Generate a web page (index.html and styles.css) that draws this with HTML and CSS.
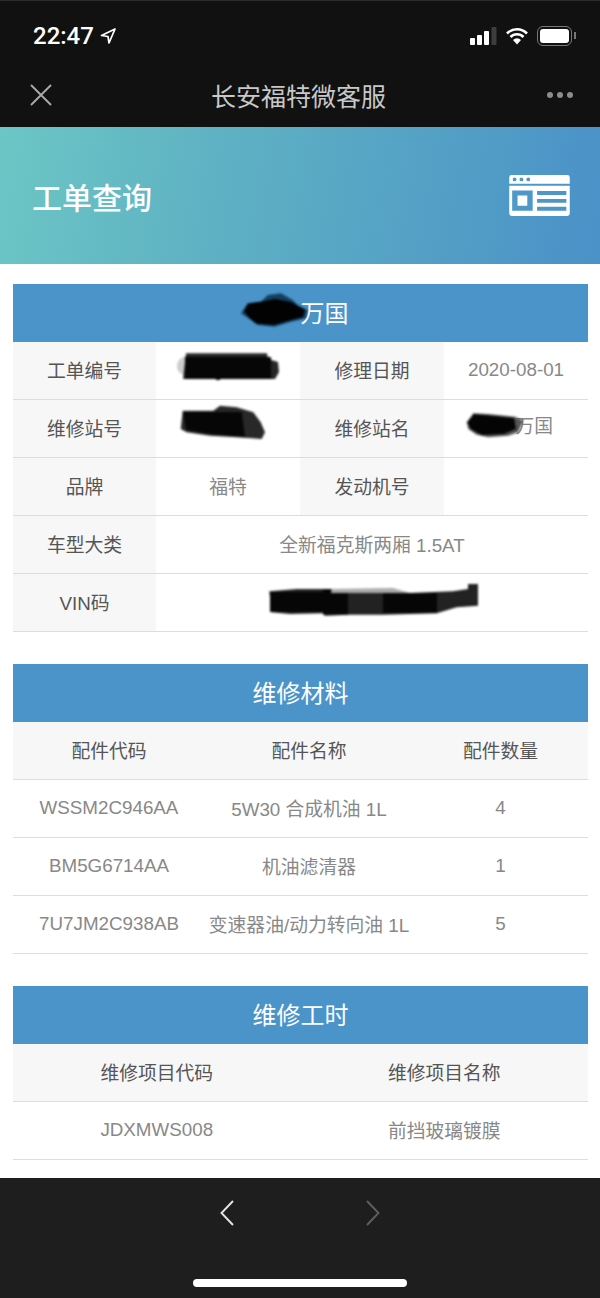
FILE: index.html
```html
<!DOCTYPE html>
<html lang="zh-CN">
<head>
  <meta charset="UTF-8" />
  <meta name="viewport" content="width=device-width, initial-scale=1" />
  <title>工单查询</title>
  <link rel="stylesheet" href="styles.css">
</head>
<body>
  <div class="top-bar">
    <div class="status-bar">
      <div class="time">22:47
        <svg class="loc" width="16" height="16" viewBox="0 0 16 16"><path d="M15 1 1.500 7.500 8 8.500 9 15Z" fill="none" stroke="#fff" stroke-width="1.700" stroke-linejoin="round"/></svg>
      </div>
      <div class="status-icons">
        <svg width="27" height="18" viewBox="0 0 27 18">
          <rect x="0" y="11" width="5" height="7" rx="1" fill="#fff"/>
          <rect x="7" y="8" width="5" height="10" rx="1" fill="#fff"/>
          <rect x="14" y="4" width="5" height="14" rx="1" fill="#fff"/>
          <rect x="21.500" y="0" width="5" height="18" rx="1" fill="#3d3d3d"/>
        </svg>
        <svg width="24" height="18" viewBox="0 0 24 18">
          <path d="M2 6.500a14 14 0 0 1 20 0M5.500 10a9 9 0 0 1 13 0" fill="none" stroke="#fff" stroke-width="2.600"/>
          <path d="M8 13a5.500 5.500 0 0 1 8 0l-4 4.500Z" fill="#fff"/>
        </svg>
        <div class="battery"><div class="battery-level"></div></div>
      </div>
    </div>
    <div class="nav-bar">
      <svg class="close" width="22" height="22" viewBox="0 0 22 22"><path d="M1 1 21 21M21 1 1 21" stroke="#aaa" stroke-width="1.900" fill="none"/></svg>
      <div class="nav-title">长安福特微客服</div>
      <div class="dots"><i></i><i></i><i></i></div>
    </div>
  </div>

  <div class="banner">
    <h1>工单查询</h1>
    <svg width="61" height="41" viewBox="0 0 62 42">
      <path fill="#fff" fill-rule="evenodd" d="M2.500 0h57A2.500 2.500 0 0 1 62 2.500V9H0V2.500A2.500 2.500 0 0 1 2.500 0ZM5.500 2.500a2 2 0 1 0 0 4 2 2 0 0 0 0-4Zm7 0a2 2 0 1 0 0 4 2 2 0 0 0 0-4Zm7 0a2 2 0 1 0 0 4 2 2 0 0 0 0-4Z"/>
      <path fill="#fff" fill-rule="evenodd" d="M0 11h62v28.500a2.500 2.500 0 0 1-2.500 2.500h-57A2.500 2.500 0 0 1 0 39.500ZM3 16v20.500h21V16Zm5.500 5h10v10.500h-10ZM28.500 16.500v4h30v-4Zm0 8v4h30v-4Zm0 8v4h30v-4Z"/>
    </svg>
  </div>

  <main>
    <section class="panel">
      <div class="panel-title panel-title-owner">
        <svg class="blob blob-title" width="67" height="34" viewBox="0 0 67 34">
          <path d="M0 20.300 6.700 10.300 20 8.700 26.700 2 40 .3 51.700 7 56.700 12 66.700 17 65 25.300 50 28.700 33.300 33.700 16.700 32 10 27Z" fill="#143f60"/>
          <path d="M3 18 7 10.500 24 8 34 6 50 9 64 17 62 24 50 27 33.300 32 15 30.500 8.300 25Z" fill="#020202"/>
        </svg>万国
      </div>
      <table class="info">
        <tr>
          <th>工单编号</th>
          <td>
            <svg class="blob blob-order" width="104" height="30" viewBox="0 0 104 30">
              <ellipse cx="12" cy="15" rx="11" ry="10" fill="#ccc"/>
              <path d="M7 28 10 2.300H91L92 8 102 11 103 21 99 28Z" fill="#262626"/>
              <path d="M9 6H84V6H95V28H44V29H40V28H9Z" fill="#060606"/>
            </svg>
          </td>
          <th>修理日期</th>
          <td class="code">2020-08-01</td>
        </tr>
        <tr>
          <th>维修站号</th>
          <td>
            <svg class="blob blob-site" width="86" height="35" viewBox="0 0 86 35">
              <path d="M2.700 5.700H33.300L40 .7 56.700 2.300 73.300 7.300 80.700 17.300 85 27.300 81.700 34 56.700 32.300 30 30.700 6.700 27.300 .7 24Z" fill="#282828"/>
              <path d="M3 7H62V9L65 32 30 29 6 25Z" fill="#060606"/>
            </svg>
          </td>
          <th>维修站名</th>
          <td>
            <svg class="blob blob-name" width="58" height="25" viewBox="0 0 58 25">
              <path d="M.7 9.300 7.300 .3 22.300 1 49 3.700 57.300 7.700 52.300 19.300 42.300 22.700 22.300 24.300 10.700 21.700 2.300 16Z" fill="#555"/>
              <path d="M1.500 9.300 8 1 48 5 50 16 38 21 15.700 22 4.700 16Z" fill="#040404"/>
            </svg>万国
          </td>
        </tr>
        <tr>
          <th>品牌</th>
          <td>福特</td>
          <th>发动机号</th>
          <td></td>
        </tr>
        <tr>
          <th>车型大类</th>
          <td colspan="3">全新福克斯两厢 1.5AT</td>
        </tr>
        <tr>
          <th>VIN码</th>
          <td colspan="3">
            <svg class="blob blob-vin" width="210" height="33" viewBox="0 0 210 33">
              <path d="M63 6 125 5 142 10H63Z" fill="#aaa"/>
              <path d="M1.300 8.300 28.700 6H63.700L63 10H142L185 8.300 200 6V1H210V22.700L188.700 24.300 168.700 30.300 115 31.700 80.300 31.700 57 32.700 55.300 30.300 22 31 3.700 29.300Z" fill="#222"/>
              <path d="M2 9H55V6H63V10H80V31.700H55V29H2ZM115 10H169V30H115Z" fill="#060606"/>
            </svg>
          </td>
        </tr>
      </table>
    </section>

    <section class="panel">
      <div class="panel-title">维修材料</div>
      <table class="parts">
        <tr><th>配件代码</th><th>配件名称</th><th>配件数量</th></tr>
        <tr><td class="code">WSSM2C946AA</td><td>5W30 合成机油 1L</td><td class="code">4</td></tr>
        <tr><td class="code">BM5G6714AA</td><td>机油滤清器</td><td class="code">1</td></tr>
        <tr><td class="code">7U7JM2C938AB</td><td>变速器油/动力转向油 1L</td><td class="code">5</td></tr>
      </table>
    </section>

    <section class="panel">
      <div class="panel-title">维修工时</div>
      <table class="hours">
        <tr><th>维修项目代码</th><th>维修项目名称</th></tr>
        <tr><td class="code">JDXMWS008</td><td>前挡玻璃镀膜</td></tr>
      </table>
    </section>
  </main>

  <div class="bottom-bar">
    <div class="arrows">
      <svg width="14" height="26" viewBox="0 0 14 26"><path d="M13 1 1.500 13 13 25" fill="none" stroke="#e4e4e4" stroke-width="1.900"/></svg>
      <svg width="14" height="26" viewBox="0 0 14 26"><path d="M1 1 12.500 13 1 25" fill="none" stroke="#5f5f5f" stroke-width="1.900"/></svg>
    </div>
    <div class="home-bar"></div>
  </div>
</body>
</html>
```

FILE: styles.css
```css
* {
  margin: 0;
  padding: 0;
  box-sizing: border-box;
}
body {
  width: 600px;
  height: 1298px;
  display: flex;
  flex-direction: column;
  background: #fff;
  font-family: "Liberation Sans", "Noto Sans CJK SC", sans-serif;
  overflow: hidden;
}

/* top */
.top-bar {
  height: 127px;
  background: #111;
  border-top: 1px solid #2c2c2c;
  flex-shrink: 0;
}
.status-bar {
  height: 70px;
  padding: 0 28px 0 33px;
  display: flex;
  justify-content: space-between;
  align-items: center;
}
.time {
  display: flex;
  align-items: center;
  gap: 6px;
  color: #fff;
  font-family: Roboto, sans-serif;
  font-size: 24px;
  font-weight: 500;
}
.status-icons {
  display: flex;
  align-items: center;
  gap: 8px;
}
.battery {
  position: relative;
  width: 35px;
  height: 20px;
  padding: 2px;
  border: 1.500px solid #777;
  border-radius: 6px;
}
.battery::after {
  content: "";
  position: absolute;
  right: -5px;
  top: 5px;
  width: 2px;
  height: 7px;
  background: #777;
}
.battery-level {
  height: 100%;
  background: #fff;
  border-radius: 3px;
}
.nav-bar {
  height: 50px;
  padding: 0 27px 2px 30px;
  display: flex;
  justify-content: space-between;
  align-items: center;
}
.nav-title {
  margin-right: 2px;
  color: #c8c8c8;
  font-family: "Noto Sans CJK SC", sans-serif;
  font-size: 25px;
  line-height: 1;
}
.dots {
  display: flex;
  gap: 4px;
}
.dots i {
  width: 6px;
  height: 6px;
  border-radius: 50%;
  background: #8c8c8c;
}

/* banner */
.banner {
  height: 137px;
  padding: 0 30px 0 32px;
  display: flex;
  justify-content: space-between;
  align-items: center;
  background: linear-gradient(100deg, #6cc6c5 0%, #5fb2c3 35%, #4a91c8 100%);
  flex-shrink: 0;
}
.banner h1 {
  color: #fff;
  font-family: "Noto Sans CJK SC", sans-serif;
  font-size: 30px;
  font-weight: 500;
  line-height: 1;
}

/* tables */
main {
  flex: 1;
  padding: 20px 12px 0 13px;
  display: flex;
  flex-direction: column;
  gap: 32px;
}
.panel-title {
  height: 58px;
  padding-bottom: 4px;
  display: flex;
  justify-content: center;
  align-items: center;
  background: #4b94ca;
  color: #fff;
  font-size: 24px;
}
.panel-title-owner {
  padding-right: 12px;
}
table {
  width: 100%;
  border-collapse: separate;
  border-spacing: 0;
  table-layout: fixed;
  font-size: 18.800px;
}
th,
td {
  height: 58px;
  padding-bottom: 3px;
  border-bottom: 1px solid #ddd;
}
th {
  font-weight: 400;
  color: #555;
}
td {
  color: #888;
  text-align: center;
}
td.code {
  padding-bottom: 1px;
}
.info th {
  width: 144px;
  background: #f7f7f7;
}
.info th:first-child {
  width: 143px;
}
.parts th,
.hours th {
  background: #f7f7f7;
}
.parts th:nth-child(1) { width: 192px; }
.parts th:nth-child(2) { width: 208px; }

/* scribbled out values */
.blob {
  display: inline-block;
  vertical-align: middle;
  filter: blur(0.8px);
}
.blob-title {
  margin: 0 -7px 2px 0;
}
.blob-order {
  margin-bottom: 6px;
}
.blob-site {
  margin: 0 10px 10px 0;
}
.blob-name {
  margin: 0 -8.500px 5px -13px;
}
.blob-vin {
  margin: 0 0 4px 2px;
}

/* bottom */
.bottom-bar {
  height: 120px;
  background: #1e1e1e;
  flex-shrink: 0;
  display: flex;
  flex-direction: column;
  align-items: center;
}
.arrows {
  margin-top: 22px;
  display: flex;
  gap: 132px;
}
.home-bar {
  margin-top: 53px;
  width: 214px;
  height: 8px;
  border-radius: 4px;
  background: #fff;
}
```
